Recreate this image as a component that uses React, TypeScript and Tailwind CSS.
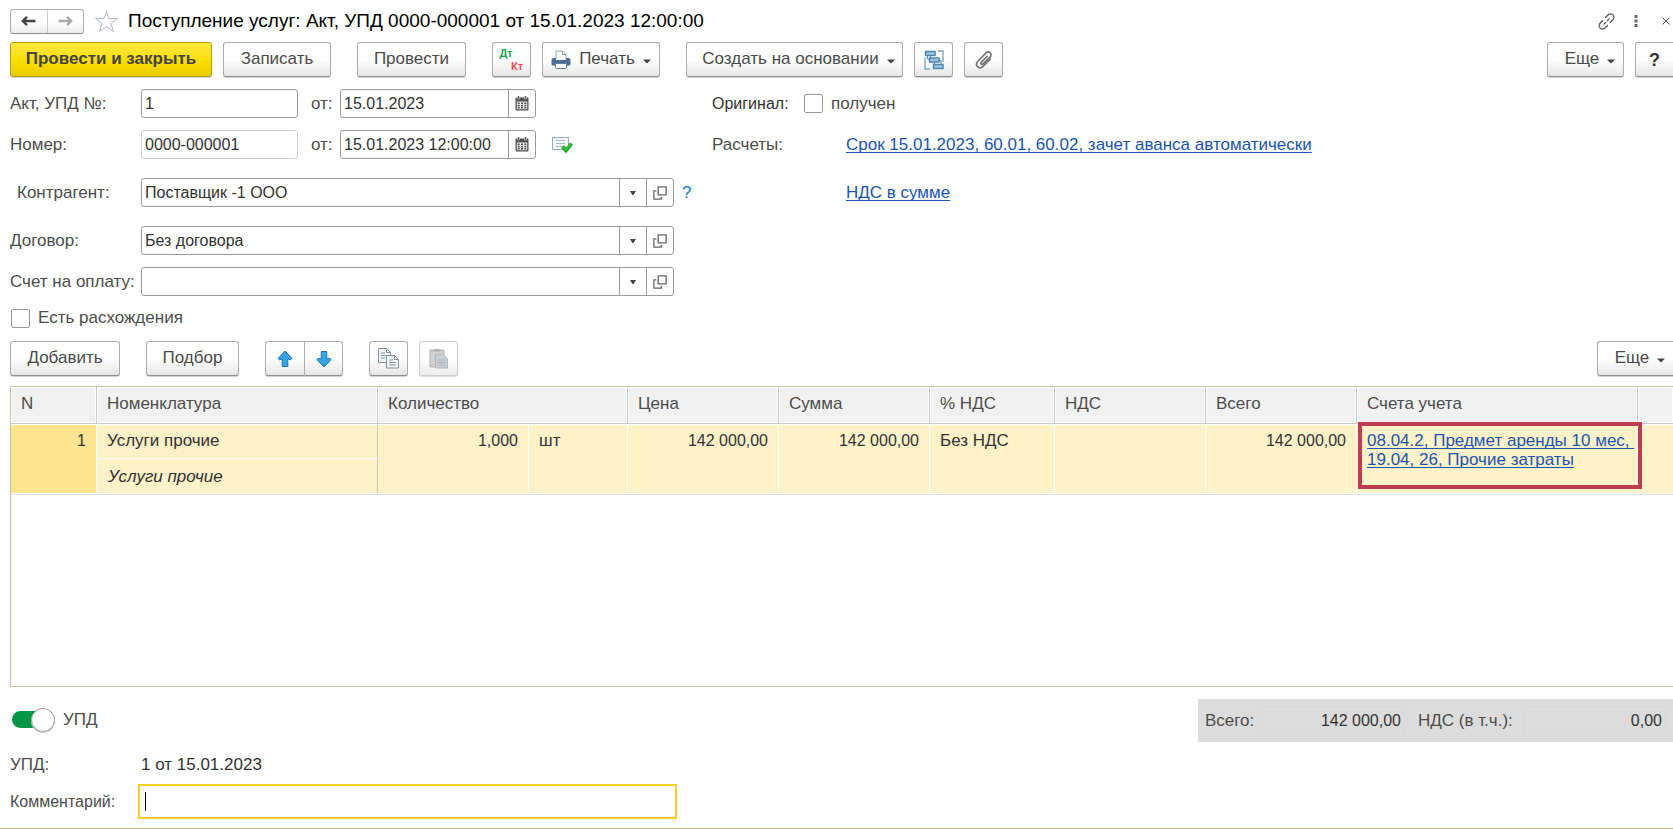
import React, { useState } from 'react';

const BUTTON = 'flex h-[35px] shrink-0 items-center justify-center rounded-[3px] border border-[#adadad] border-b-[#8f8f8f] bg-linear-to-b from-white from-50% to-[#e6e6e6] text-[#4a4a4a] shadow-[0_1px_0_#d4d4d4]';
const INPUT = 'min-w-0 flex-1 bg-transparent px-[3px] text-base text-[#333333] outline-none';
const FIELD = 'flex h-[29px] shrink-0 rounded-[3px] border border-[#9b9b9b] bg-white';
const LABEL = 'w-[131px] shrink-0 whitespace-nowrap';
const LINK = 'text-[#1c55b0] underline decoration-1 underline-offset-2 [text-decoration-skip-ink:none]';
const HEAD = 'h-[37px] border-r border-b border-[#c9c9c9] bg-[#f1f1f1] px-[10px] pb-[2px] text-left font-normal shadow-[inset_0_0_0_1px_white]';
const CELL = 'border-t border-r border-b border-white bg-[#fff1c8] px-[10px] pt-[6px] align-top';
const NUMBER_CELL = `${CELL} text-right text-base leading-5`;
const TOTAL = 'h-[29px] rounded-[3px] border border-[#d8d8d8] px-[3px] text-right text-base text-[#333333]';

const Caret: React.FC = () => (
    <svg width="8" height="5" viewBox="0 0 8 5" fill="#444444">
        <path d="M0 0.5h8L4 4.5z" />
    </svg>
);

const SmallCaret: React.FC = () => (
    <svg width="6" height="4" viewBox="0 0 6 4" fill="#444444">
        <path d="M0 0h6L3.600 4H2.400z" />
    </svg>
);

const ArrowIcon: React.FC<{ color: string; flip?: boolean }> = ({ color, flip }) => (
    <svg width="15" height="12" viewBox="0 0 15 12" className={flip ? 'rotate-180' : ''}>
        <path d="M6 1.800L1.800 6 6 10.200M2.500 6h12" fill="none" stroke={color} strokeWidth="2.400" />
    </svg>
);

const StarIcon: React.FC = () => (
    <svg width="24" height="23" viewBox="0 0 24 23" fill="none" stroke="#b4bac2" strokeWidth="1">
        <path d="M11.500 1.500l2.500 7h8.500l-6.700 5 2.600 8-6.900-4.900-6.900 4.900 2.600-8-6.700-5H9z" />
    </svg>
);

const CalendarIcon: React.FC = () => (
    <svg width="14" height="15" viewBox="0 0 14 15">
        <path d="M1.500 1.500h11a1 1 0 0 1 1 1v11a1 1 0 0 1-1 1h-11a1 1 0 0 1-1-1v-11a1 1 0 0 1 1-1z" fill="#4f4f4f" />
        <path d="M1.800 5.500h10.400v7.700H1.800z" fill="#f4f4f4" />
        <path d="M2.500 0h2v3h-2zM9.500 0h2v3h-2z" fill="#444444" stroke="white" strokeWidth="0.500" />
        <path d="M2.700 6.500h2v1.600h-2zM6 6.500h2v1.600H6zM9.300 6.500h2v1.600h-2zM2.700 8.800h2v1.600h-2zM6 8.800h2v1.600H6zM9.300 8.800h2v1.600h-2zM2.700 11h2v1.600h-2zM6 11h2v1.600H6zM9.300 11h2v1.600h-2z" fill="#4f4f4f" />
    </svg>
);

const OpenIcon: React.FC = () => (
    <svg width="14" height="14" viewBox="0 0 14 14" fill="none" stroke="#666666" strokeWidth="1.300">
        <path d="M5.200 0.900h7.900v7.900H5.200zM3.400 4.900H0.900v8.200h7.400v-2.300" />
    </svg>
);

const PrinterIcon: React.FC = () => (
    <svg width="20" height="20" viewBox="0 0 20 20">
        <path d="M5 9V1h6.500L15 4.500V9" fill="white" stroke="#8ea3b5" />
        <path d="M11.500 1v3.500H15" fill="none" stroke="#8ea3b5" />
        <path d="M2.500 8H5v2h10V8h2.500a2 2 0 0 1 2 2v4a1.500 1.500 0 0 1-1.500 1.500H2A1.500 1.500 0 0 1 0.500 14v-4a2 2 0 0 1 2-2z" fill="#4d6f93" />
        <path d="M4.500 13.500h11v4a1 1 0 0 1-1 1h-9a1 1 0 0 1-1-1z" fill="white" stroke="#5f7f9f" />
    </svg>
);

const StructureIcon: React.FC = () => (
    <svg width="20" height="20" viewBox="0 0 20 20" stroke="#4f87ae">
        <path d="M1 7.500v11.500h5M14 1h5v11" fill="none" stroke="#7ba3c0" strokeWidth="1.300" />
        <path d="M1.500 1.500h9.500v4H1.500zM5.500 8h9.500v4H5.500zM9.500 14.500H19v4H9.500z" fill="#9fc5df" strokeWidth="1.500" />
        <path d="M6.500 5.500V8M3.500 5.500v3.500h2M10.500 12v2.500M15 10.500h2v4" fill="none" />
    </svg>
);

const ClipIcon: React.FC = () => (
    <svg width="18" height="18" viewBox="0 0 18 18" fill="none" stroke="#707070" strokeWidth="1.600" strokeLinecap="round">
        <path d="M12.200 5.200L6.300 11.100c-1.400 1.500.5 3.100 1.800 1.800l6.800-6.800c3-3.300-1-6.800-4-4L3 10c-4 4.300 1.300 9 5.200 5.300l7.300-7.300" />
    </svg>
);

const LinkIcon: React.FC = () => (
    <svg width="17" height="17" viewBox="0 0 16 16" fill="none" stroke="#555555" strokeWidth="1.200" strokeLinecap="round">
        <path d="M7 4.300l2.600-2.600c3-2.600 7 1.400 4.600 4.400l-2.600 2.600M9 11.700l-2.600 2.600c-3 2.600-7-1.400-4.600-4.400l2.600-2.600" strokeDasharray="5 1" />
        <path d="M5.500 10.500l1.600-1.600M8.600 7.400l1.900-1.900" />
    </svg>
);

const PostedIcon: React.FC = () => (
    <svg width="21" height="17" viewBox="0 0 21 17">
        <path d="M0.500 1.500h16v12h-16z" fill="#f3f7fa" stroke="#93a9bc" />
        <path d="M4 4.500h9M4 7.500h9M4 10.500h6" stroke="#a9b9c7" />
        <path d="M10.500 10.500l3.500 4 5.500-7" fill="none" stroke="#149a1d" strokeWidth="3.600" />
        <path d="M10.800 10.800l3.100 3.200 5-6.200" fill="none" stroke="#35cb3b" strokeWidth="1.600" />
    </svg>
);

const MoveIcon: React.FC<{ flip?: boolean }> = ({ flip }) => (
    <svg width="16" height="18" viewBox="0 0 16 18" className={flip ? 'rotate-180' : ''}>
        <path d="M8 1l7 7.500-1.500 1.300L10.800 9v7.500H5.200V9L2.500 9.800 1 8.500z" fill="#36a5e8" stroke="#1d74ab" strokeLinejoin="round" />
    </svg>
);

const CopyIcon: React.FC = () => (
    <svg width="21" height="21" viewBox="0 0 21 21" fill="#f4f7f9" stroke="#7f90a0">
        <path d="M0.500 0.500h8l4 4v10h-12z" />
        <path d="M8.500 0.500v4h4M3 5h4M3 7.500h5M3 10h4" fill="none" />
        <path d="M8.500 7.500h8l4 4v8.500h-12z" />
        <path d="M16.500 7.500v4h4M11 12h4M11 14.500h7M11 17h7" fill="none" />
    </svg>
);

const PasteIcon: React.FC = () => (
    <svg width="20" height="21" viewBox="0 0 20 21">
        <path d="M1 2h14v17H1z" fill="#d0d0d0" stroke="#bcb3ac" />
        <path d="M4.500 3.500v-2h2L8 0.500l1.500 1h2v2z" fill="#aeb2b5" />
        <path d="M6.500 6.500h8l4 4v9.500h-12z" fill="#c9ced2" stroke="#b0b8be" />
        <path d="M9 12h6M9 14.500h7M9 17h7" stroke="#aab3ba" />
    </svg>
);

interface DateFieldProps {
    id: string;
    value: string;
}

const DateField: React.FC<DateFieldProps> = ({ id, value }) => (
    <>
        <label htmlFor={id} className="w-[42px] shrink-0 pl-[13px]">от:</label>
        <div className={`${FIELD} w-[196px]`}>
            <input id={id} defaultValue={value} className={INPUT} />
            <button aria-label="Выбрать дату" className="flex w-[27px] items-center justify-center border-l border-[#9b9b9b]">
                <CalendarIcon />
            </button>
        </div>
    </>
);

interface RefFieldProps {
    id: string;
    label: string;
    value: string;
    indent?: boolean;
    children?: React.ReactNode;
}

const RefField: React.FC<RefFieldProps> = ({ id, label, value, indent, children }) => (
    <div className="flex items-center">
        <label htmlFor={id} className={`${LABEL} ${indent ? 'pl-[7px]' : ''}`}>{label}</label>
        <div className={`${FIELD} w-[533px]`}>
            <input id={id} defaultValue={value} className={INPUT} />
            <button aria-label="Выбрать" className="flex w-[27px] items-center justify-center border-l border-[#9b9b9b]">
                <SmallCaret />
            </button>
            <button aria-label="Открыть" className="flex w-[27px] items-center justify-center border-l border-[#9b9b9b]">
                <OpenIcon />
            </button>
        </div>
        {children}
    </div>
);

const App: React.FC = () => {
    const [upd, setUpd] = useState(true);
    const [received, setReceived] = useState(false);
    const [mismatch, setMismatch] = useState(false);
    const checkbox = 'size-[19px] shrink-0 appearance-none rounded-[2px] border border-[#9b9b9b] bg-white checked:bg-[#009646]';

    return (
        <div className="flex min-h-screen flex-col overflow-hidden border-b border-[#c8bd6e] bg-white pl-[10px] font-['Liberation_Sans',Arial,sans-serif] text-[17px] leading-5 text-[#4d4d4d]">
            <header className="flex h-[42px] items-center">
                <div className="flex h-[25px] w-[74px] shrink-0 rounded-[3px] border border-[#adadad] border-b-[#8f8f8f] bg-linear-to-b from-white from-50% to-[#ececec]">
                    <button aria-label="Назад" className="flex flex-1 items-center justify-center border-r border-[#cccccc]"><ArrowIcon color="#444444" /></button>
                    <button aria-label="Вперед" className="flex flex-1 items-center justify-center"><ArrowIcon color="#aaaaaa" flip /></button>
                </div>
                <button aria-label="В избранное" className="mr-[9px] ml-[11px]"><StarIcon /></button>
                <h1 className="flex-1 truncate text-[19px] leading-6 text-black">Поступление услуг: Акт, УПД 0000-000001 от 15.01.2023 12:00:00</h1>
                <div className="flex items-center">
                    <button aria-label="Ссылка" className="mr-[19px]"><LinkIcon /></button>
                    <button aria-label="Меню" className="mr-[24px]">
                        <svg width="4" height="12" viewBox="0 0 4 12" fill="#666666"><path d="M0.500 0h3v3h-3zM0.500 4.500h3v3h-3zM0.500 9h3v3h-3z" /></svg>
                    </button>
                    <button aria-label="Закрыть" className="mr-[3px]">
                        <svg width="8" height="8" viewBox="0 0 8 8" stroke="#555555"><path d="M0.500 0.500l7 7M7.500 0.500l-7 7" /></svg>
                    </button>
                </div>
            </header>

            <div className="flex">
                <button className="mr-[11px] flex h-[35px] w-[202px] shrink-0 items-center justify-center rounded-[3px] border border-[#b39d00] bg-linear-to-b from-[#ffe93c] via-[#fbdf00] to-[#e9cb00] pb-[2px] font-bold text-[#444444] shadow-[0_1px_0_#d4d4d4]">Провести и закрыть</button>
                <button className={`${BUTTON} mr-[26px] w-[108px] pb-[2px]`}>Записать</button>
                <button className={`${BUTTON} mr-[26px] w-[109px] pb-[2px]`}>Провести</button>
                <button aria-label="Дт Кт" className={`${BUTTON} mr-[11px] w-[39px] flex-col text-[11px] leading-[13px] font-bold`}>
                    <span className="pr-[11px] text-[#20a45a]">Дт</span>
                    <span className="pl-[11px] text-[#ea4f4f]">Кт</span>
                </button>
                <button className={`${BUTTON} mr-[26px] w-[118px] gap-[8px]`}>
                    <PrinterIcon />
                    <span className="pb-[2px]">Печать</span>
                    <span className="pt-[3px]"><Caret /></span>
                </button>
                <button className={`${BUTTON} mr-[11px] w-[217px] gap-[8px] pl-[8px]`}>
                    <span className="pb-[2px]">Создать на основании</span>
                    <span className="pt-[3px]"><Caret /></span>
                </button>
                <button aria-label="Структура подчиненности" className={`${BUTTON} mr-[11px] w-[39px]`}><StructureIcon /></button>
                <button aria-label="Присоединенные файлы" className={`${BUTTON} w-[39px]`}><ClipIcon /></button>
                <button className={`${BUTTON} mr-[11px] ml-auto w-[77px] gap-[8px] pl-[9px]`}>
                    <span className="pb-[2px]">Еще</span>
                    <span className="pt-[3px]"><Caret /></span>
                </button>
                <button className={`${BUTTON} w-[38px] rounded-r-none border-r-0 text-lg font-bold text-[#333333]`}>?</button>
            </div>

            <div className="mt-[12px] flex">
                <div className="flex w-[702px] shrink-0 flex-col">
                    <div className="flex items-center">
                        <label htmlFor="act" className={LABEL}>Акт, УПД №:</label>
                        <div className={`${FIELD} w-[157px]`}><input id="act" defaultValue="1" className={INPUT} /></div>
                        <DateField id="act-date" value="15.01.2023" />
                    </div>
                    <div className="mt-[12px] flex items-center">
                        <label htmlFor="number" className={LABEL}>Номер:</label>
                        <div className="flex h-[29px] w-[157px] shrink-0 rounded-[3px] border border-[#d0d0d0] bg-white"><input id="number" readOnly value="0000-000001" className={INPUT} /></div>
                        <DateField id="number-date" value="15.01.2023 12:00:00" />
                        <span className="ml-[16px]"><PostedIcon /></span>
                    </div>
                    <div className="mt-[19px]">
                        <RefField id="partner" label="Контрагент:" value="Поставщик -1 ООО" indent>
                            <button className="ml-[8px] text-[#0f7fd0]">?</button>
                        </RefField>
                    </div>
                    <div className="mt-[19px]">
                        <RefField id="contract" label="Договор:" value="Без договора" />
                    </div>
                    <div className="mt-[12px]">
                        <RefField id="invoice" label="Счет на оплату:" value="" />
                    </div>
                </div>
                <div className="flex flex-col">
                    <div className="flex h-[29px] items-center">
                        <span className="w-[92px] text-base text-[#333333]">Оригинал:</span>
                        <input id="received" type="checkbox" checked={received} onChange={(e) => setReceived(e.target.checked)} className={checkbox} />
                        <label htmlFor="received" className="ml-2">получен</label>
                    </div>
                    <div className="mt-[12px] flex h-[29px] items-center">
                        <span className="w-[134px]">Расчеты:</span>
                        <a href="#settlements" className={LINK}>Срок 15.01.2023, 60.01, 60.02, зачет аванса автоматически</a>
                    </div>
                    <div className="mt-[19px] flex h-[29px] items-center pl-[134px]">
                        <a href="#vat" className={LINK}>НДС в сумме</a>
                    </div>
                </div>
            </div>

            <div className="mt-[12px] flex items-center pl-px">
                <input id="mismatch" type="checkbox" checked={mismatch} onChange={(e) => setMismatch(e.target.checked)} className={checkbox} />
                <label htmlFor="mismatch" className="ml-2">Есть расхождения</label>
            </div>

            <div className="mt-[13px] flex">
                <button className={`${BUTTON} mr-[26px] w-[110px] pb-[2px]`}>Добавить</button>
                <button className={`${BUTTON} mr-[26px] w-[93px] pb-[2px]`}>Подбор</button>
                <button aria-label="Вверх" className={`${BUTTON} w-[39px] rounded-r-none border-r-0`}><MoveIcon /></button>
                <button aria-label="Вниз" className={`${BUTTON} mr-[26px] w-[39px] rounded-l-none`}><MoveIcon flip /></button>
                <button aria-label="Копировать" className={`${BUTTON} mr-[11px] w-[39px]`}><CopyIcon /></button>
                <button aria-label="Вставить" disabled className="flex h-[35px] w-[39px] items-center justify-center rounded-[3px] border border-[#cccccc] bg-linear-to-b from-white from-50% to-[#ececec] shadow-[0_1px_0_#dddddd]"><PasteIcon /></button>
                <button className={`${BUTTON} ml-auto w-[76px] gap-[8px] rounded-r-none border-r-0 pl-[9px]`}>
                    <span className="pb-[2px]">Еще</span>
                    <span className="pt-[3px]"><Caret /></span>
                </button>
            </div>

            <div className="mt-[10px] min-h-[300px] flex-1 border border-r-0 border-[#c9c5a4]">
                <table className="w-full table-fixed border-separate border-spacing-0">
                    <colgroup>
                        <col className="w-[86px]" />
                        <col className="w-[281px]" />
                        <col className="w-[151px]" />
                        <col className="w-[99px]" />
                        <col className="w-[151px]" />
                        <col className="w-[151px]" />
                        <col className="w-[125px]" />
                        <col className="w-[151px]" />
                        <col className="w-[151px]" />
                        <col className="w-[281px]" />
                        <col />
                    </colgroup>
                    <thead>
                        <tr>
                            <th className={HEAD}>N</th>
                            <th className={HEAD}>Номенклатура</th>
                            <th colSpan={2} className={HEAD}>Количество</th>
                            <th className={HEAD}>Цена</th>
                            <th className={HEAD}>Сумма</th>
                            <th className={HEAD}>% НДС</th>
                            <th className={HEAD}>НДС</th>
                            <th className={HEAD}>Всего</th>
                            <th className={HEAD}>Счета учета</th>
                            <th className={`${HEAD} border-r-0`} aria-label="Прочее" />
                        </tr>
                    </thead>
                    <tbody className="text-[#333333]">
                        <tr className="h-[35px]">
                            <td rowSpan={2} className="border-t border-r border-b border-white bg-[#fee48f] px-[10px] pt-[6px] text-right align-top text-base leading-5">1</td>
                            <td className="border-t border-r border-b border-t-white border-r-[#c9c9c9] border-b-white bg-[#fff1c8] px-[10px] pt-[6px] align-top">Услуги прочие</td>
                            <td rowSpan={2} className={NUMBER_CELL}>1,000</td>
                            <td rowSpan={2} className={CELL}>шт</td>
                            <td rowSpan={2} className={NUMBER_CELL}>142 000,00</td>
                            <td rowSpan={2} className={NUMBER_CELL}>142 000,00</td>
                            <td rowSpan={2} className={CELL}>Без НДС</td>
                            <td rowSpan={2} className={CELL} />
                            <td rowSpan={2} className={NUMBER_CELL}>142 000,00</td>
                            <td rowSpan={2} className={`${CELL} relative leading-[19px] whitespace-nowrap`}>
                                <a href="#accounts" className={LINK}>08.04.2, Предмет аренды 10 мес,&nbsp;<br />19.04, 26, Прочие затраты</a>
                                <div className="pointer-events-none absolute -top-[3px] -right-[5px] bottom-[4px] left-px z-10 border-4 border-[#bf3d50]" />
                            </td>
                            <td rowSpan={2} className={`${CELL} border-r-0`} />
                        </tr>
                        <tr className="h-[35px]">
                            <td className="border-r border-b border-r-[#c9c9c9] border-b-white bg-[#fff1c8] px-[11px] pt-[8px] align-top italic">Услуги прочие</td>
                        </tr>
                        <tr><td colSpan={11} className="h-px bg-[#e2e2e2]" /></tr>
                    </tbody>
                </table>
            </div>

            <div className="mt-[12px] flex h-[43px] items-center">
                <label className="flex items-center gap-[8px] pb-[2px] pl-[2px]">
                    <input type="checkbox" role="switch" checked={upd} onChange={(e) => setUpd(e.target.checked)} className="peer sr-only" />
                    <span className="flex h-[17px] w-[43px] items-center rounded-full bg-[#b5b5b5] peer-checked:justify-end peer-checked:bg-[#009646]">
                        <span className="size-[24px] rounded-full border border-[#a0a0a0] bg-white shadow-[0_1px_0_#c8c8c8]" />
                    </span>
                    УПД
                </label>
                <div className="ml-auto flex h-full items-center bg-[#dcdcdc] pr-[7px] pl-[7px]">
                    <label htmlFor="total" className="w-[56px]">Всего:</label>
                    <input id="total" readOnly value="142 000,00" className={`${TOTAL} mr-[13px] w-[144px]`} />
                    <label htmlFor="vat-total" className="w-[105px]">НДС (в т.ч.):</label>
                    <input id="vat-total" readOnly value="0,00" className={`${TOTAL} w-[143px]`} />
                </div>
            </div>

            <div className="mt-[13px] flex">
                <span className={LABEL}>УПД:</span>
                <span className="text-[#333333]">1 от 15.01.2023</span>
            </div>
            <div className="mt-[9px] mb-[9px] flex items-center">
                <label htmlFor="comment" className="w-[128px] shrink-0 text-base">Комментарий:</label>
                <div className="relative w-[539px]">
                    <input id="comment" autoFocus className="h-[35px] w-full border-2 border-[#fbcd26] bg-white px-[5px] text-base text-[#333333] caret-transparent outline-none" />
                    <span className="pointer-events-none absolute top-2 left-[7px] h-[19px] w-px bg-black" />
                </div>
            </div>
        </div>
    );
};

export default App;
